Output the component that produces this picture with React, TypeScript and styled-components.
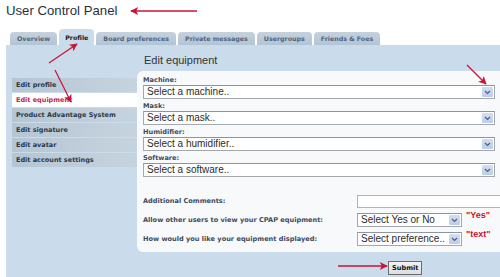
import styled, { createGlobalStyle } from "styled-components";

const GlobalStyle = createGlobalStyle`
  html, body {
    margin: 0;
    padding: 0;
    background: #ffffff;
    overflow: hidden;
  }
  body {
    width: 500px;
    height: 277px;
    font-family: "DejaVu Sans", Verdana, sans-serif;
  }
`;

const Page = styled.div`
  position: relative;
  width: 500px;
  height: 277px;
  overflow: hidden;
`;

const Title = styled.h2`
  margin: 0;
  padding: 3px 0 0 6px;
  font-family: "Liberation Sans", Arial, sans-serif;
  font-weight: normal;
  font-size: 13.2px;
  line-height: 16px;
  color: #28313f;
`;

const Tabs = styled.ul`
  display: flex;
  align-items: flex-end;
  gap: 2px;
  list-style: none;
  margin: 10px 0 0 10px;
  padding: 0;
  height: 16px;
`;

const Tab = styled.li<{ $active?: boolean }>`
  height: ${(p) => (p.$active ? "16px" : "13px")};
  padding: 0 ${(p) => (p.$active ? "6px" : "7px")};
  border-radius: 4px 4px 0 0;
  background: ${(p) =>
    p.$active ? "#cadceb" : "linear-gradient(#c4d2de, #b3c4d2)"};
  color: ${(p) => (p.$active ? "#1a1a1a" : "#536482")};
  font-weight: bold;
  font-size: 6.3px;
  line-height: ${(p) => (p.$active ? "17px" : "13px")};
  white-space: nowrap;
`;

const Panel = styled.div`
  display: flex;
  margin-left: 6px;
  width: 520px;
  height: 232px;
  background: #cadceb;
`;

const Menu = styled.ul`
  list-style: none;
  margin: 33px 0 0 0;
  padding: 0 0 0 6px;
  width: 125px;
  flex-shrink: 0;
`;

const MenuItem = styled.li<{ $active?: boolean }>`
  height: 14px;
  margin-bottom: 1px;
  padding-left: 4px;
  background: ${(p) =>
    p.$active ? "#ffffff" : "linear-gradient(to right, #b5c5d2, #c6d4df)"};
  color: ${(p) => (p.$active ? "#bc2a4d" : "#2b3848")};
  font-weight: bold;
  font-size: 6.5px;
  line-height: 14px;
  white-space: nowrap;
`;

const Content = styled.div`
  flex: 1;
  display: flex;
  flex-direction: column;
`;

const Heading = styled.h3`
  margin: 0;
  padding: 9px 0 0 7px;
  height: 17px;
  font-family: "Liberation Sans", Arial, sans-serif;
  font-weight: normal;
  font-size: 11px;
  line-height: 12px;
  color: #333333;
`;

const Box = styled.div`
  background: #f8f9fa;
  border-radius: 6px 0 0 6px;
  padding: 5px 0 6px 6px;
`;

const Group = styled.div`
  margin-bottom: 3px;
`;

const Label = styled.div`
  height: 9px;
  font-weight: bold;
  font-size: 6.6px;
  line-height: 9px;
  color: #3f4b5e;
  white-space: nowrap;
`;

const SelectBox = styled.div<{ $width: number }>`
  display: flex;
  align-items: center;
  justify-content: space-between;
  box-sizing: border-box;
  width: ${(p) => p.$width}px;
  height: 14px;
  border: 1px solid #a2a8ae;
  border-top-color: #8e949a;
  background: #ffffff;
  padding: 0 1px 0 3px;
`;

const SelectText = styled.span`
  font-family: "Liberation Sans", Arial, sans-serif;
  font-size: 10px;
  line-height: 12px;
  color: #2c2c2c;
  white-space: nowrap;
`;

const DropButton = styled.span`
  display: flex;
  align-items: center;
  justify-content: center;
  width: 11px;
  height: 10px;
  background: linear-gradient(#d3def0, #bccde8);
  border-radius: 1px;
`;

const Fields = styled.div`
  display: grid;
  grid-template-columns: 214px auto;
  margin-top: 18px;
  row-gap: 5px;
  align-items: center;
`;

const FieldCell = styled.div`
  display: flex;
  align-items: flex-start;
  gap: 4px;
`;

const TextInput = styled.div`
  box-sizing: border-box;
  width: 160px;
  height: 13px;
  border: 1px solid #b0b5ba;
  background: #ffffff;
`;

const Note = styled.span`
  margin-top: -3px;
  font-family: "Liberation Sans", Arial, sans-serif;
  font-weight: bold;
  font-size: 9px;
  line-height: 10px;
  color: #c8102e;
`;

const SubmitRow = styled.div`
  padding: 3px 0 0 251px;
`;

const SubmitButton = styled.button`
  box-sizing: border-box;
  height: 14px;
  padding: 0 3px;
  border: 1px solid #6b6b6b;
  background: linear-gradient(#f2f2f2, #dedede);
  font-family: "DejaVu Sans", Verdana, sans-serif;
  font-weight: bold;
  font-size: 6.6px;
  line-height: 12px;
  color: #111111;
`;

const Overlay = styled.svg`
  position: absolute;
  left: 0;
  top: 0;
  pointer-events: none;
`;

const Chevron = () => (
  <svg width="7" height="5" viewBox="0 0 7 5">
    <polyline
      points="1,1 3.5,3.5 6,1"
      fill="none"
      stroke="#4a5d82"
      strokeWidth="1.2"
    />
  </svg>
);

const Select = ({ text, width }: { text: string; width: number }) => (
  <SelectBox $width={width}>
    <SelectText>{text}</SelectText>
    <DropButton>
      <Chevron />
    </DropButton>
  </SelectBox>
);

const tabs = [
  "Overview",
  "Profile",
  "Board preferences",
  "Private messages",
  "Usergroups",
  "Friends & Foes",
];

const menu = [
  "Edit profile",
  "Edit equipment",
  "Product Advantage System",
  "Edit signature",
  "Edit avatar",
  "Edit account settings",
];

const equipment = [
  { label: "Machine:", text: "Select a machine.." },
  { label: "Mask:", text: "Select a mask.." },
  { label: "Humidifier:", text: "Select a humidifier.." },
  { label: "Software:", text: "Select a software.." },
];

// annotation arrows drawn over the page
const arrows = [
  { x1: 197, y1: 11, x2: 131, y2: 11 },
  { x1: 49, y1: 63, x2: 77, y2: 44 },
  { x1: 55, y1: 70, x2: 71, y2: 102 },
  { x1: 467, y1: 65, x2: 486, y2: 84 },
  { x1: 338, y1: 266, x2: 387, y2: 266 },
];

export default function App() {
  return (
    <Page>
      <GlobalStyle />
      <Title>User Control Panel</Title>
      <Tabs>
        {tabs.map((t) => (
          <Tab key={t} $active={t === "Profile"}>
            {t}
          </Tab>
        ))}
      </Tabs>
      <Panel>
        <Menu>
          {menu.map((m) => (
            <MenuItem key={m} $active={m === "Edit equipment"}>
              {m}
            </MenuItem>
          ))}
        </Menu>
        <Content>
          <Heading>Edit equipment</Heading>
          <Box>
            {equipment.map((e) => (
              <Group key={e.label}>
                <Label>{e.label}</Label>
                <Select text={e.text} width={352} />
              </Group>
            ))}
            <Fields>
              <Label>Additional Comments:</Label>
              <FieldCell>
                <TextInput />
              </FieldCell>
              <Label>Allow other users to view your CPAP equipment:</Label>
              <FieldCell>
                <Select text="Select Yes or No" width={105} />
                <Note>"Yes"</Note>
              </FieldCell>
              <Label>How would you like your equipment displayed:</Label>
              <FieldCell>
                <Select text="Select preference.." width={105} />
                <Note>"text"</Note>
              </FieldCell>
            </Fields>
          </Box>
          <SubmitRow>
            <SubmitButton>Submit</SubmitButton>
          </SubmitRow>
        </Content>
      </Panel>
      <Overlay width="500" height="277" viewBox="0 0 500 277">
        <defs>
          <marker
            id="head"
            viewBox="0 0 10 10"
            refX="9"
            refY="5"
            markerWidth="9"
            markerHeight="8"
            markerUnits="userSpaceOnUse"
            orient="auto"
          >
            <path d="M0,0 L10,5 L0,10 L2.5,5 z" fill="#cc1236" />
          </marker>
        </defs>
        {arrows.map((a, i) => (
          <line
            key={i}
            {...a}
            stroke="#cc1236"
            strokeWidth="1.3"
            markerEnd="url(#head)"
          />
        ))}
      </Overlay>
    </Page>
  );
}
